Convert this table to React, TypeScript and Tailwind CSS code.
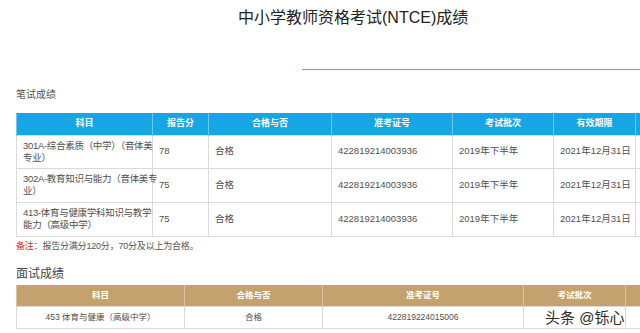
const font = { fontFamily: '"Liberation Sans", "Noto Sans CJK SC", sans-serif' }

const written = [
    {
        subject: ['301A-综合素质（中学）（音体美', '专业）'],
        score: '78',
        pass: '合格',
        ticket: '422819214003936',
        batch: '2019年下半年',
        valid: '2021年12月31日',
    },
    {
        subject: ['302A-教育知识与能力（音体美专', '业）'],
        score: '75',
        pass: '合格',
        ticket: '422819214003936',
        batch: '2019年下半年',
        valid: '2021年12月31日',
    },
    {
        subject: ['413-体育与健康学科知识与教学', '能力（高级中学）'],
        score: '75',
        pass: '合格',
        ticket: '422819214003936',
        batch: '2019年下半年',
        valid: '2021年12月31日',
    },
]

const WrittenTable = () => {
    const th = 'border-x border-[#6fc6ef] font-bold text-white text-[9px] text-center h-[22px] p-0'
    const td = 'border border-[#dadada] text-[9.5px] text-[#505050] px-[6px] py-0 text-left align-middle whitespace-nowrap'
    return (
        <table className="table-fixed border-collapse w-[700px]">
            <colgroup>
                <col className="w-[136px]" />
                <col className="w-[56px]" />
                <col className="w-[123px]" />
                <col className="w-[121px]" />
                <col className="w-[101px]" />
                <col className="w-[82px]" />
                <col className="w-[81px]" />
            </colgroup>
            <thead>
                <tr className="bg-[#16a6e6]">
                    <th className={th}>科目</th>
                    <th className={th}>报告分</th>
                    <th className={th}>合格与否</th>
                    <th className={th}>准考证号</th>
                    <th className={th}>考试批次</th>
                    <th className={th}>有效期限</th>
                    <th className={th}></th>
                </tr>
            </thead>
            <tbody>
                {written.map((r, i) => (
                    <tr key={i} className={i === 0 ? 'h-[33px]' : 'h-[34px]'}>
                        <td className={td + ' leading-[12px] tracking-[-0.3px]'}>
                            <span className="block">{r.subject[0]}</span>
                            <span className="block">{r.subject[1]}</span>
                        </td>
                        <td className={td}>{r.score}</td>
                        <td className={td}>{r.pass}</td>
                        <td className={td}>{r.ticket}</td>
                        <td className={td}>{r.batch}</td>
                        <td className={td}>{r.valid}</td>
                        <td className={td}></td>
                    </tr>
                ))}
            </tbody>
        </table>
    )
}

const InterviewTable = () => {
    const th = 'border-x border-[#d9c39f] font-bold text-white text-[8.5px] text-center h-[22px] p-0'
    const td = 'border border-[#dadada] text-[8.5px] text-[#505050] text-center h-[22px] p-0 whitespace-nowrap'
    return (
        <table className="table-fixed border-collapse w-[690px]">
            <colgroup>
                <col className="w-[168px]" />
                <col className="w-[138px]" />
                <col className="w-[201px]" />
                <col className="w-[102px]" />
                <col className="w-[81px]" />
            </colgroup>
            <thead>
                <tr className="bg-[#c3a26d]">
                    <th className={th}>科目</th>
                    <th className={th}>合格与否</th>
                    <th className={th}>准考证号</th>
                    <th className={th}>考试批次</th>
                    <th className={th}></th>
                </tr>
            </thead>
            <tbody>
                <tr>
                    <td className={td}>453 体育与健康（高级中学）</td>
                    <td className={td}>合格</td>
                    <td className={td}>422819224015006</td>
                    <td className={td}></td>
                    <td className={td}></td>
                </tr>
            </tbody>
        </table>
    )
}

export default function App() {
    return (
        <div className="relative w-[640px] h-[333px] overflow-hidden bg-white" style={font}>
            <div className="h-[36px] pt-[8px] pl-[238px] text-[16px] leading-[20px] text-[#222] whitespace-nowrap">
                中小学教师资格考试(NTCE)成绩
            </div>
            <div className="mt-[33px] ml-[302px] h-px bg-[#4fb6c2]" />
            <div className="pl-[16px]">
                <h2 className="mt-[18px] text-[10px] leading-[14px] text-[#555]">笔试成绩</h2>
                <div className="mt-[11px]">
                    <WrittenTable />
                </div>
                <p className="mt-[3px] text-[9px] leading-[12px] text-[#555] tracking-[-0.2px]">
                    <span className="text-[#c8322b]">备注</span>：报告分满分120分，70分及以上为合格。
                </p>
                <h2 className="mt-[14px] text-[12px] leading-[16px] text-[#444]">面试成绩</h2>
                <div className="mt-[3px]">
                    <InterviewTable />
                </div>
            </div>
            <div className="absolute left-[545px] top-[308px] text-[15px] leading-[20px] text-[#2b2b2b] whitespace-nowrap [text-shadow:0_0_2px_#fff]">
                头条 @铄心
            </div>
        </div>
    )
}
